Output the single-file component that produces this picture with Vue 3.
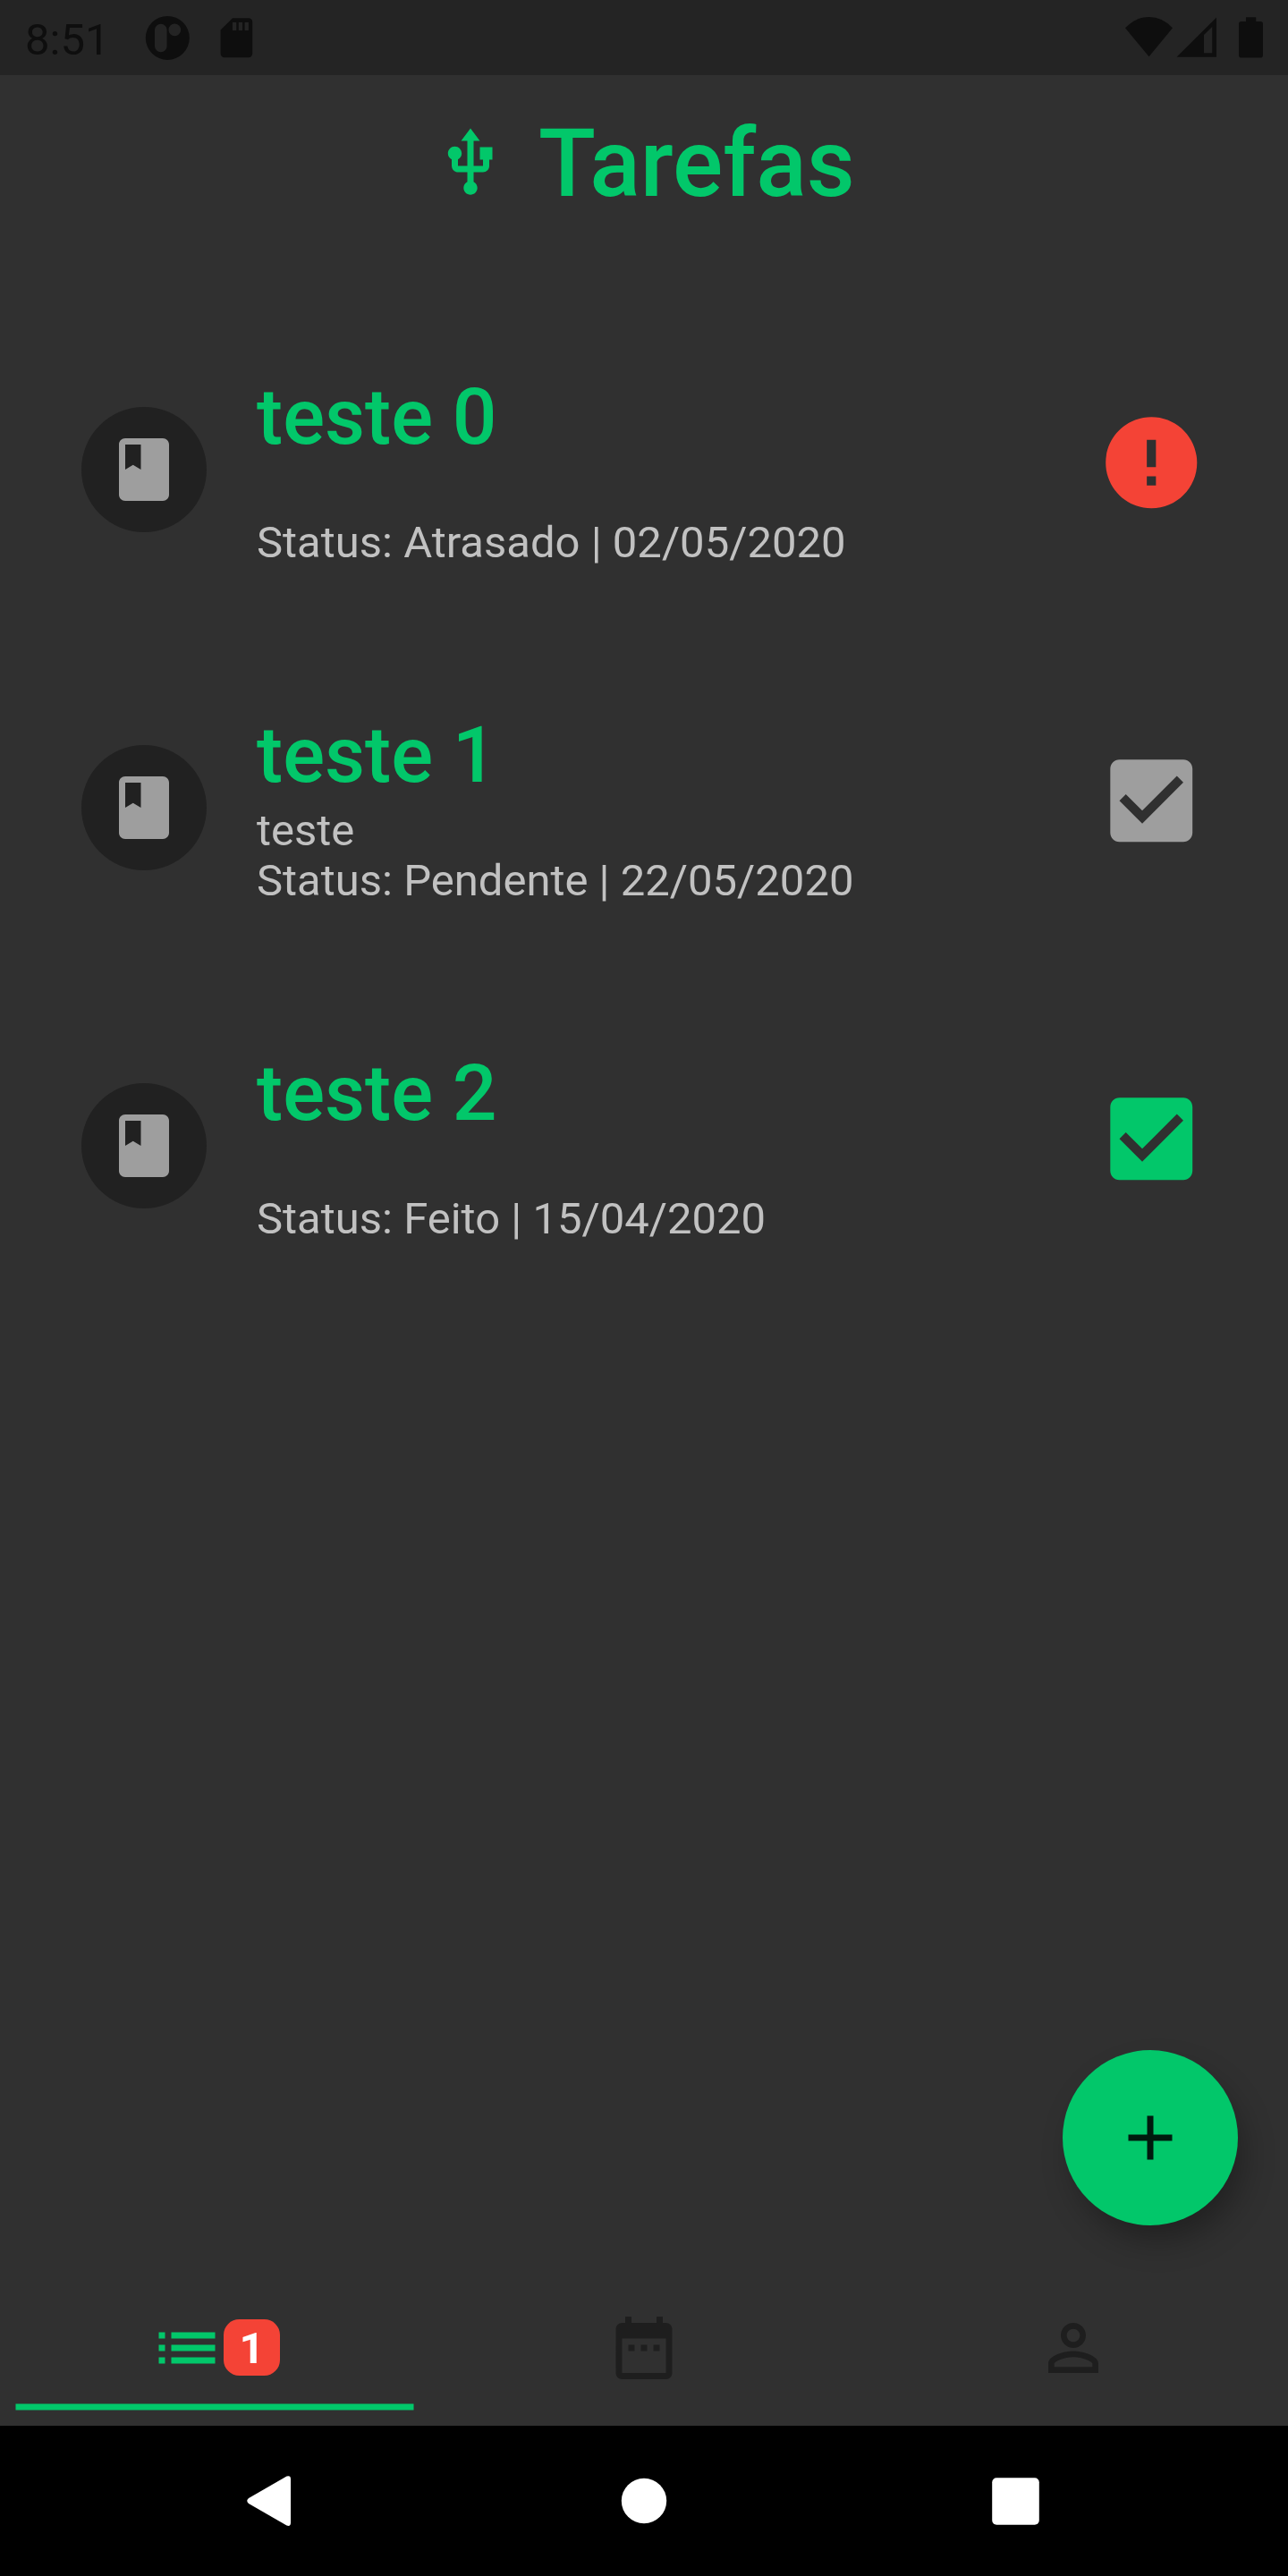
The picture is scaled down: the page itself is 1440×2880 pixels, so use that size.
<script setup>
const tasks = [
  { title: 'teste 0', note: '', status: 'Atrasado', date: '02/05/2020', kind: 'late' },
  { title: 'teste 1', note: 'teste', status: 'Pendente', date: '22/05/2020', kind: 'pending' },
  { title: 'teste 2', note: '', status: 'Feito', date: '15/04/2020', kind: 'done' },
]

const errorPath =
  'M12 2C6.48 2 2 6.48 2 12s4.48 10 10 10 10-4.48 10-10S17.52 2 12 2zm1 15h-2v-2h2v2zm0-4h-2V7h2v6z'
const checkPath =
  'M19 3H5c-1.11 0-2 .9-2 2v14c0 1.1.89 2 2 2h14c1.11 0 2-.9 2-2V5c0-1.1-.89-2-2-2zm-9 14l-5-5 1.41-1.41L10 14.17l7.59-7.59L19 8l-9 9z'
</script>

<template>
  <div class="screen">
    <div class="status-bar">
      <span class="clock">8:51</span>
      <svg class="status-left" width="124" height="84" viewBox="160 0 124 84">
        <path
          fill-rule="evenodd"
          d="M187.3 17.9a24.5 24.5 0 1 0 0 49a24.5 24.5 0 1 0 0-49zM179.8 26.7a6.8 6.8 0 0 1 6.8 6.8v18a6.8 6.8 0 0 1-13.6 0v-18a6.8 6.8 0 0 1 6.8-6.8zM195.3 26.6a6.8 6.8 0 1 1 0 13.6a6.8 6.8 0 1 1 0-13.6z"
        />
        <path
          fill-rule="evenodd"
          d="M260 20.3h18a4.2 4.2 0 0 1 4.2 4.2v35.6a4.2 4.2 0 0 1-4.2 4.2h-27.2a4.2 4.2 0 0 1-4.2-4.2V33.6zM260 25v9h4.3v-9zM266.8 25v9h4.3v-9zM273.6 25v9h4.3v-9z"
        />
      </svg>
      <svg class="status-right" width="156" height="84" viewBox="1256 0 156 84">
        <path d="M1258 31.3Q1269.5 19 1284.6 19T1311 31.3L1284.6 63.3z" />
        <path fill-rule="evenodd" d="M1315.5 63.8L1360 19.5v44.3zM1346 39v20.2h9.2V30z" />
        <path
          d="M1393 19.3h11.2v4.7h5a2.8 2.8 0 0 1 2.8 2.8v35a2.8 2.8 0 0 1-2.8 2.8h-21.4a2.8 2.8 0 0 1-2.8-2.8v-35a2.8 2.8 0 0 1 2.8-2.8h5.2z"
        />
      </svg>
    </div>

    <header class="header">
      <svg class="icon" viewBox="0 0 24 24">
        <path
          d="M15 7v4h1v2h-3V5h2l-3-4-3 4h2v8H8v-2.07c.7-.37 1.2-1.08 1.2-1.93 0-1.21-.99-2.2-2.2-2.2-1.21 0-2.2.99-2.2 2.2 0 .85.5 1.56 1.2 1.93V13c0 1.11.89 2 2 2h3v3.05c-.71.37-1.2 1.1-1.2 1.95 0 1.22.99 2.2 2.2 2.2 1.21 0 2.2-.98 2.2-2.2 0-.85-.49-1.58-1.2-1.95V15h3c1.11 0 2-.89 2-2v-2h1V7h-4z"
        />
      </svg>
      <h1>Tarefas</h1>
    </header>

    <main class="list">
      <article v-for="task in tasks" :key="task.title" class="task">
        <div class="avatar">
          <svg class="icon" viewBox="0 0 24 24">
            <path
              d="M18 2H6c-1.1 0-2 .9-2 2v16c0 1.1.9 2 2 2h12c1.1 0 2-.9 2-2V4c0-1.1-.9-2-2-2zM6 4h5v8l-2.5-1.5L6 12V4z"
            />
          </svg>
        </div>
        <div class="text">
          <h2>{{ task.title }}</h2>
          <p>{{ task.note }}</p>
          <p>Status: {{ task.status }} | {{ task.date }}</p>
        </div>
        <svg class="state" :class="task.kind" viewBox="0 0 24 24">
          <path :d="task.kind === 'late' ? errorPath : checkPath" />
        </svg>
      </article>
    </main>

    <button class="fab" aria-label="Adicionar">
      <svg class="icon" viewBox="0 0 24 24">
        <path d="M19 13h-6v6h-2v-6H5v-2h6V5h2v6h6v2z" />
      </svg>
    </button>

    <nav class="tabs">
      <div class="tab active">
        <div class="tab-icons">
          <svg class="icon" viewBox="0 0 24 24">
            <path
              d="M3 13h2v-2H3v2zm0 4h2v-2H3v2zm0-8h2V7H3v2zm4 4h14v-2H7v2zm0 4h14v-2H7v2zM7 7v2h14V7H7z"
            />
          </svg>
          <span class="badge">1</span>
        </div>
        <svg class="indicator" width="446" height="8" viewBox="0 0 446 8">
          <rect x="0.5" y="0.5" width="445" height="7" />
        </svg>
      </div>
      <div class="tab">
        <div class="tab-icons">
          <svg class="icon" viewBox="0 0 24 24">
            <path
              d="M9 11H7v2h2v-2zm4 0h-2v2h2v-2zm4 0h-2v2h2v-2zm2-7h-1V2h-2v2H8V2H6v2H5c-1.11 0-1.99.9-1.99 2L3 20c0 1.1.89 2 2 2h14c1.1 0 2-.9 2-2V6c0-1.1-.9-2-2-2zm0 16H5V9h14v11z"
            />
          </svg>
        </div>
      </div>
      <div class="tab">
        <div class="tab-icons">
          <svg class="icon" viewBox="0 0 24 24">
            <path
              d="M12 5.9c1.16 0 2.1.94 2.1 2.1s-.94 2.1-2.1 2.1S9.9 9.16 9.9 8s.94-2.1 2.1-2.1m0 9c2.97 0 6.1 1.46 6.1 2.1v1.1H5.9V17c0-.64 3.13-2.1 6.1-2.1M12 4C9.79 4 8 5.79 8 8s1.79 4 4 4 4-1.79 4-4-1.79-4-4-4zm0 9c-2.67 0-8 1.34-8 4v3h16v-3c0-2.66-5.33-4-8-4z"
            />
          </svg>
        </div>
      </div>
    </nav>

    <div class="system-nav">
      <svg width="50" height="58" viewBox="0 0 50 58">
        <path d="M2 26L44.5 1.5Q49 0 49 4.5V53.5Q49 58 44.5 56.5L2 32Q-1.5 29 2 26z" />
      </svg>
      <svg width="52" height="52" viewBox="0 0 52 52"><circle cx="26" cy="26" r="25.2" /></svg>
      <svg width="53" height="53" viewBox="0 0 53 53">
        <rect x="0.2" y="0.2" width="52.6" height="52.6" rx="5" />
      </svg>
    </div>
  </div>
</template>

<style>
body {
  margin: 0;
  background: #303030;
}
</style>

<style scoped>
.screen {
  position: relative;
  display: flex;
  flex-direction: column;
  width: 1440px;
  height: 2880px;
  overflow: hidden;
  background: #303030;
  font-family: Roboto, sans-serif;
}

svg {
  display: block;
  flex: none;
  fill: currentColor;
}

.icon {
  width: 84px;
  height: 84px;
}

.status-bar {
  display: flex;
  flex: none;
  height: 84px;
  background: #242424;
  color: #0e0e0e;
}

.clock {
  width: 132px;
  padding-left: 28px;
  font-size: 49px;
  line-height: 90px;
}

.status-right {
  margin-left: auto;
  margin-right: 28px;
}

.header {
  display: flex;
  flex: none;
  align-items: center;
  gap: 34.5px;
  height: 196px;
  padding-left: 483.5px;
  color: #02c76a;
}

h1 {
  margin: 4px 0 0;
  font-size: 105px;
  font-weight: 500;
  line-height: 124px;
}

.list {
  flex: 1;
  padding-top: 53px;
}

.task {
  display: flex;
  height: 378px;
  padding: 0 91px;
}

.avatar {
  display: flex;
  flex: none;
  align-items: center;
  justify-content: center;
  width: 140px;
  height: 140px;
  margin-top: 122px;
  border-radius: 50%;
  background: #212121;
  color: #9e9e9e;
}

.text {
  flex: 1;
  margin: 77px 0 0 56px;
  color: #c1c1c1;
}

h2 {
  margin: 0;
  color: #02c76a;
  font-size: 87.5px;
  font-weight: 500;
  line-height: 112px;
}

p {
  height: 56px;
  margin: 0;
  font-size: 49px;
  line-height: 58px;
}

.state {
  width: 122.5px;
  height: 122.5px;
  margin: 123px 0.5px 0 0;
}

.state.late {
  color: #f44336;
}

.state.pending {
  color: #9e9e9e;
}

.state.done {
  color: #02c76a;
}

.fab {
  position: absolute;
  right: 56px;
  bottom: 392px;
  display: flex;
  align-items: center;
  justify-content: center;
  width: 196px;
  height: 196px;
  padding: 0;
  border: 0;
  border-radius: 50%;
  background: #02c76a;
  color: #001a0e;
  box-shadow: 9px 20px 36px -4px rgba(0, 0, 0, 0.32);
}

.tabs {
  display: flex;
  flex: none;
  height: 147px;
  color: #1e1e1e;
}

.tab {
  display: flex;
  flex: 1;
  flex-direction: column;
  align-items: center;
}

.tab.active {
  color: #02c76a;
}

.tab-icons {
  display: flex;
  align-items: center;
  height: 84px;
  margin-top: 18px;
}

.badge {
  width: 63px;
  height: 63px;
  margin: 0 0.5px 1px -0.5px;
  border-radius: 17.5px;
  background: #f44336;
  color: #fff;
  font-size: 49px;
  font-weight: 700;
  line-height: 65px;
  text-align: center;
}

.indicator {
  margin-top: 20px;
}

.system-nav {
  display: flex;
  flex: none;
  align-items: center;
  height: 168px;
  background: #000;
  color: #fff;
}

.system-nav svg:first-child {
  margin-left: 276px;
}

.system-nav svg:nth-child(2) {
  margin-left: 368px;
}

.system-nav svg:last-child {
  margin-left: 362.5px;
}
</style>
